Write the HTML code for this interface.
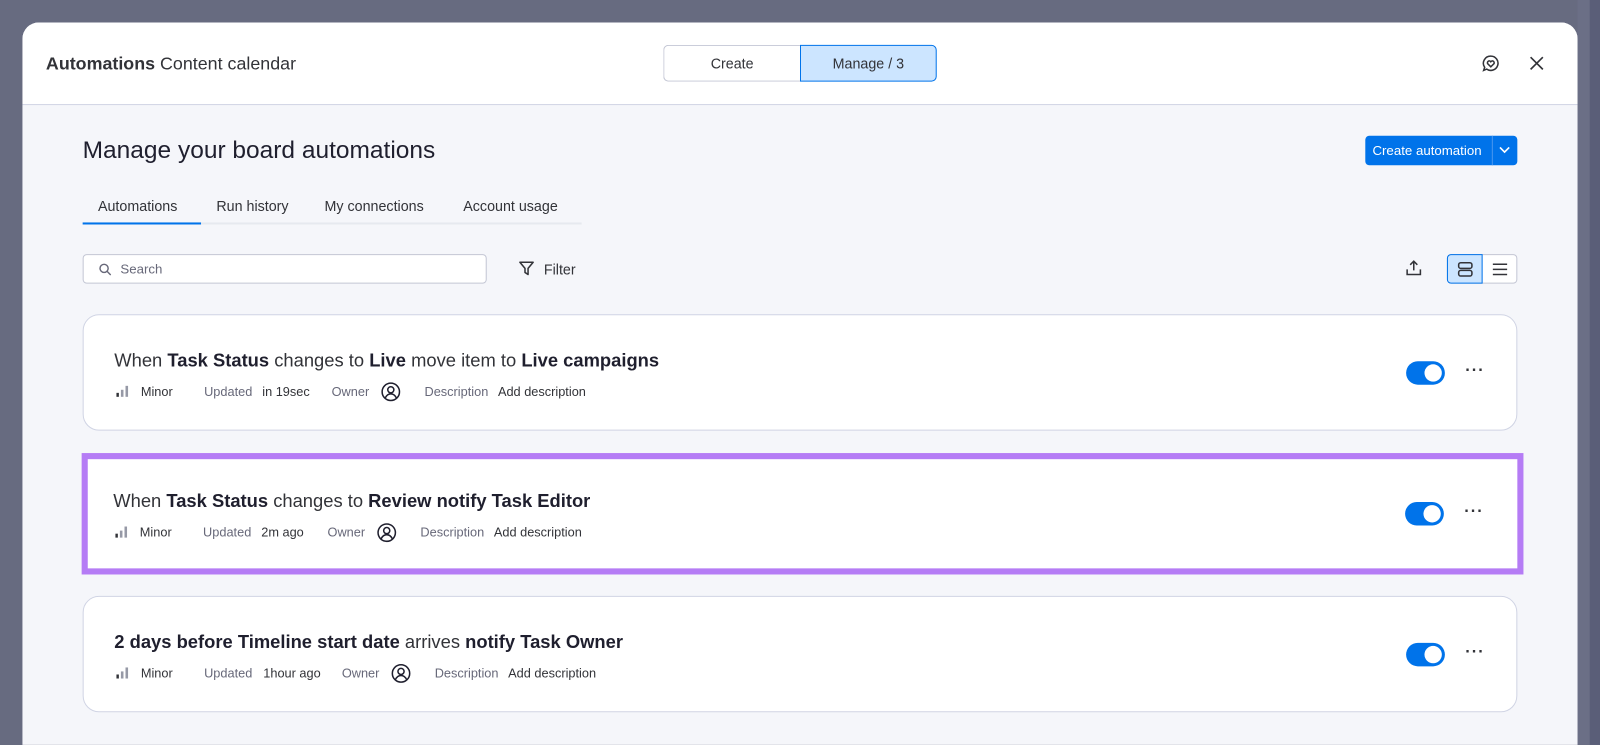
<!DOCTYPE html>
<html><head><meta charset="utf-8"><style>
*{box-sizing:border-box;margin:0;padding:0}
html{width:1600px;height:745px;overflow:hidden}
body{width:1600px;height:745px;overflow:hidden;background:#676b80;font-family:"Liberation Sans",sans-serif;color:#323338;position:relative}
.wrap{position:absolute;left:0;top:0;width:1568px;height:730px;overflow:hidden;transform:scale(1.0204);transform-origin:0 0}
.strip1{position:absolute;left:1546px;top:0;width:12px;height:730px;background:#6b6f86}
.strip2{position:absolute;left:1558px;top:0;width:10px;height:730px;background:#5a5e78}
.modal{position:absolute;left:22px;top:22px;width:1524px;height:730px;background:#f5f6fa;border-radius:16px;overflow:hidden}
.hdr{height:81px;background:#fff;border-bottom:1px solid #d0d4e4;position:relative}
.ttl{position:absolute;left:23px;top:30px;font-size:17.5px}
.seg{position:absolute;left:628px;top:22px;display:flex}
.seg div{height:36px;width:134px;display:flex;align-items:center;justify-content:center;font-size:14px;border:1px solid #c3c6d4}
.seg .a{border-radius:5px 0 0 5px;border-right:none}
.seg .b{background:#cce5ff;border-color:#0073ea;border-radius:0 5px 5px 0}
.abs{position:absolute}
h1{position:absolute;left:59px;top:112px;font-size:24px;font-weight:normal;color:#1f1f2e}
.cbtn{position:absolute;left:1316px;top:111px;width:149px;height:29px;background:#0073ea;border-radius:4px;color:#fff;font-size:13px;display:flex;align-items:center;padding-left:7px}
.cbtn .d{position:absolute;left:124px;top:0;width:1px;height:29px;background:#4a97ef}
.tabs{position:absolute;left:59px;top:170px;width:489px;height:28px;border-bottom:2px solid #e6e9ef;font-size:14px}
.tabs span{position:absolute;top:2px}
.tabs .u{position:absolute;left:0;bottom:-2px;width:116px;height:2px;background:#0073ea}
.search{position:absolute;left:59px;top:227px;width:396px;height:29px;background:#fff;border:1px solid #c3c6d4;border-radius:4px;font-size:13px;color:#676879;padding:6px 0 0 36px}
.card{position:absolute;left:59px;width:1406px;height:114px;background:#fff;border:1px solid #d0d4e4;border-radius:16px}
.card .t{position:absolute;left:30px;top:34px;font-size:18px;color:#323338}
.card b{color:#1f1f2e;font-weight:600}
.meta{position:absolute;left:30px;top:68px;font-size:12.5px;color:#676879;white-space:nowrap}
.meta span{position:absolute;top:0}
.meta .k{color:#323338}
.tog{position:absolute;left:1296px;top:45px;width:38px;height:23px;background:#0073ea;border-radius:12px}
.tog:after{content:"";position:absolute;right:3px;top:3px;width:17px;height:17px;border-radius:50%;background:#fff}
.dots{position:absolute;left:1354px;top:46px;font-size:16px;font-weight:bold;letter-spacing:1px;color:#323338}
.hl{position:absolute;left:58px;top:422px;width:1413px;height:119px;border:6px solid #b57cf5;background:#fff}
</style></head><body>
<div class="wrap">
<div class="strip1"></div><div class="strip2"></div>
<div class="modal">
 <div class="hdr">
  <div class="ttl"><b>Automations</b> Content calendar</div>
  <div class="seg"><div class="a">Create</div><div class="b">Manage / 3</div></div>
  <svg class="abs" style="left:1430px;top:31px" width="18" height="18" viewBox="0 0 18 18" fill="none" stroke="#323338" stroke-width="1.5"><path d="M9 2a7 7 0 1 1-4 12.7L2 16l1-3A7 7 0 0 1 9 2z"/><path d="M9 12.5l-3-3a1.7 1.7 0 0 1 3-2 1.7 1.7 0 0 1 3 2z"/></svg>
  <svg class="abs" style="left:1477px;top:33px" width="14" height="14" viewBox="0 0 14 14" stroke="#323338" stroke-width="1.6"><path d="M1 1l12 12M13 1L1 13"/></svg>
 </div>
 <h1>Manage your board automations</h1>
 <div class="cbtn">Create automation<div class="d"></div>
  <svg class="abs" style="left:131px;top:10px" width="11" height="8" viewBox="0 0 11 8" fill="none" stroke="#fff" stroke-width="1.6"><path d="M1 1.5l4.5 4.5L10 1.5"/></svg></div>
 <div class="tabs"><span style="left:15px">Automations</span><span style="left:131px">Run history</span><span style="left:237px">My connections</span><span style="left:373px">Account usage</span><div class="u"></div></div>
 <div class="search">Search
  <svg class="abs" style="left:15px;top:8px" width="12" height="12" viewBox="0 0 12 12" fill="none" stroke="#676879" stroke-width="1.4"><circle cx="5" cy="5" r="4"/><path d="M8 8l3.5 3.5"/></svg></div>
 <svg class="abs" style="left:486px;top:233px" width="16" height="16" viewBox="0 0 16 16" fill="none" stroke="#323338" stroke-width="1.5"><path d="M1.5 2h13L9.5 8v6l-3-2V8z" stroke-linejoin="round"/></svg>
 <div class="abs" style="left:511px;top:234px;font-size:14px">Filter</div>
 <svg class="abs" style="left:1355px;top:232px" width="17" height="17" viewBox="0 0 17 17" fill="none" stroke="#323338" stroke-width="1.5"><path d="M8.5 11V2M5 5.5l3.5-3.5L12 5.5M2 10v5h13v-5"/></svg>
 <div class="abs" style="left:1396px;top:227px;width:69px;height:29px;border:1px solid #c3c6d4;border-radius:4px;background:#fff"></div>
 <div class="abs" style="left:1396px;top:227px;width:35px;height:29px;border:1px solid #0073ea;border-radius:4px 0 0 4px;background:#cce5ff"></div>
 <svg class="abs" style="left:1406px;top:234px" width="16" height="16" viewBox="0 0 16 16" fill="none" stroke="#323338" stroke-width="1.5"><rect x="1.5" y="1.5" width="13" height="5.5" rx="2"/><rect x="1.5" y="9" width="13" height="5.5" rx="2"/></svg>
 <svg class="abs" style="left:1440px;top:235px" width="16" height="14" viewBox="0 0 16 14" stroke="#323338" stroke-width="1.5"><path d="M1 2h14M1 7h14M1 12h14"/></svg>

 <div class="card" style="top:286px">
  <div class="t">When <b>Task Status</b> changes to <b>Live</b> move item to <b>Live campaigns</b></div>
  <div class="meta"><svg class="abs" style="left:2px;top:1px" width="12" height="11"><rect x="0" y="7" width="2.5" height="4" fill="#323338"/><rect x="4.5" y="4" width="2.5" height="7" fill="#9699a6"/><rect x="9" y="0" width="2.5" height="11" fill="#9699a6"/></svg><span class="k" style="left:26px">Minor</span><span style="left:88px">Updated</span><span class="k" style="left:145px">in 19sec</span><span style="left:213px">Owner</span>
  <svg class="abs" style="left:261px;top:-3px" width="20" height="20" viewBox="0 0 20 20" fill="none" stroke="#1f1f2e" stroke-width="1.5"><circle cx="10" cy="10" r="8.5"/><circle cx="10" cy="8" r="3"/><path d="M4.5 16c1.5-3 3.5-4 5.5-4s4 1 5.5 4"/></svg>
  <span style="left:304px">Description</span><span class="k" style="left:376px">Add description</span></div>
  <div class="tog"></div><div class="dots">···</div>
 </div>

 <div class="hl"></div>
 <div class="card" style="top:425px;border:none;border-radius:0;background:transparent">
  <div class="t">When <b>Task Status</b> changes to <b>Review notify Task Editor</b></div>
  <div class="meta"><svg class="abs" style="left:2px;top:1px" width="12" height="11"><rect x="0" y="7" width="2.5" height="4" fill="#323338"/><rect x="4.5" y="4" width="2.5" height="7" fill="#9699a6"/><rect x="9" y="0" width="2.5" height="11" fill="#9699a6"/></svg><span class="k" style="left:26px">Minor</span><span style="left:88px">Updated</span><span class="k" style="left:145px">2m ago</span><span style="left:210px">Owner</span>
  <svg class="abs" style="left:258px;top:-3px" width="20" height="20" viewBox="0 0 20 20" fill="none" stroke="#1f1f2e" stroke-width="1.5"><circle cx="10" cy="10" r="8.5"/><circle cx="10" cy="8" r="3"/><path d="M4.5 16c1.5-3 3.5-4 5.5-4s4 1 5.5 4"/></svg>
  <span style="left:301px">Description</span><span class="k" style="left:373px">Add description</span></div>
  <div class="tog"></div><div class="dots">···</div>
 </div>

 <div class="card" style="top:562px">
  <div class="t"><b>2 days before</b> <b>Timeline start date</b> arrives <b>notify Task Owner</b></div>
  <div class="meta"><svg class="abs" style="left:2px;top:1px" width="12" height="11"><rect x="0" y="7" width="2.5" height="4" fill="#323338"/><rect x="4.5" y="4" width="2.5" height="7" fill="#9699a6"/><rect x="9" y="0" width="2.5" height="11" fill="#9699a6"/></svg><span class="k" style="left:26px">Minor</span><span style="left:88px">Updated</span><span class="k" style="left:146px">1hour ago</span><span style="left:223px">Owner</span>
  <svg class="abs" style="left:271px;top:-3px" width="20" height="20" viewBox="0 0 20 20" fill="none" stroke="#1f1f2e" stroke-width="1.5"><circle cx="10" cy="10" r="8.5"/><circle cx="10" cy="8" r="3"/><path d="M4.5 16c1.5-3 3.5-4 5.5-4s4 1 5.5 4"/></svg>
  <span style="left:314px">Description</span><span class="k" style="left:386px">Add description</span></div>
  <div class="tog"></div><div class="dots">···</div>
 </div>
</div>
</div>
</body></html>
